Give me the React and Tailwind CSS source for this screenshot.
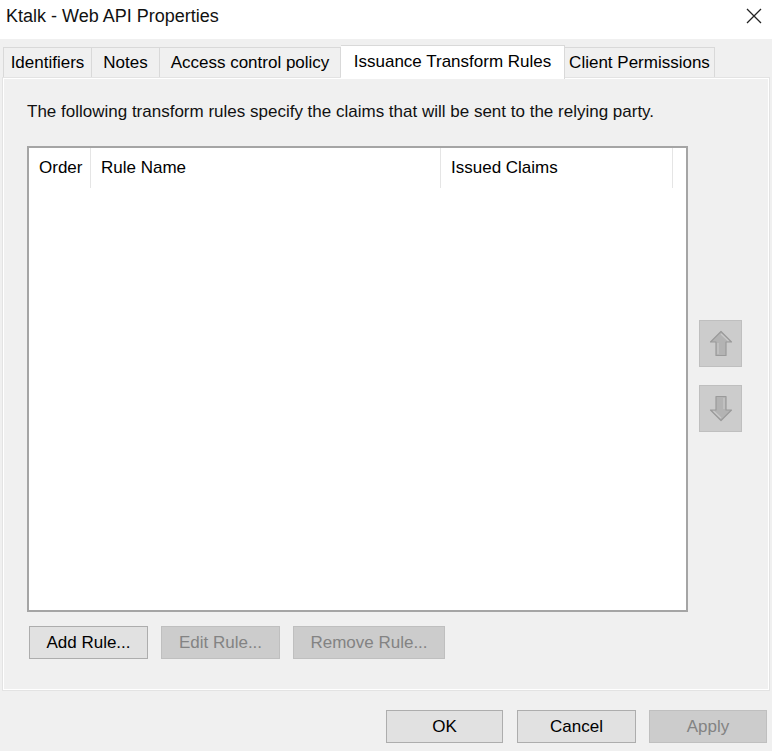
import React from 'react';

const tabs = [
    { label: 'Identifiers', w: 'w-[89px]' },
    { label: 'Notes', w: 'w-[68px]' },
    { label: 'Access control policy', w: 'w-[181px]' },
    { label: 'Issuance Transform Rules', w: 'w-[224px]', active: true },
    { label: 'Client Permissions', w: 'w-[150px]' },
];

const ArrowIcon = ({ down }) => (
    <svg width="24" height="27" viewBox="0 0 24 27" className={down ? 'rotate-180' : ''}>
        <path d="M12 1.5 L22.5 12 L17 12 L17 25.5 L7 25.5 L7 12 L1.5 12 Z" fill="#b3b3b3" stroke="#9a9a9a" strokeWidth="1.2" strokeLinejoin="round" />
        <path d="M12 4 L19.5 11 M9 13 L9 24" stroke="#c9c9c9" strokeWidth="1.2" fill="none" />
    </svg>
);

const Button = ({ children, disabled, className = '' }) => (
    <div
        className={`h-[33px] flex items-center justify-center border ${disabled
            ? 'bg-[#cccccc] border-[#bfbfbf] text-[#838383]'
            : 'bg-[#e1e1e1] border-[#adadad] text-black'
            } ${className}`}
    >
        {children}
    </div>
);

export default function App() {
    return (
        <div className="w-[772px] h-[751px] bg-[#f0f0f0] flex flex-col text-[17px] text-black overflow-hidden" style={{ fontFamily: '"Liberation Sans", Arial, sans-serif' }}>
            {/* Title bar */}
            <div className="h-[39px] bg-white flex items-center justify-between pl-[6px] pr-[10px] pb-[7px] shrink-0">
                <span className="text-[18px] text-[#111]">Ktalk - Web API Properties</span>
                <svg width="16" height="16" viewBox="0 0 16 16">
                    <path d="M1 1 L15 15 M15 1 L1 15" stroke="#222" strokeWidth="1.3" />
                </svg>
            </div>

            {/* Tabs */}
            <div className="mt-[5px] pl-[3px] h-[34px] flex items-end shrink-0">
                {tabs.map((t, i) => (
                    <div
                        key={t.label}
                        className={`${t.w} flex items-center justify-center border border-b-0 border-[#d9d9d9] ${i > 0 ? 'border-l-0' : ''} ${t.active
                            ? 'h-[34px] bg-white pb-[2px] relative z-10 -mb-px border-l'
                            : 'h-[31px] bg-[#f0f0f0]'
                            }`}
                    >
                        {t.label}
                    </div>
                ))}
            </div>

            {/* Panel */}
            <div className="mx-[3px] h-[612px] border border-white bg-[#f0f0f0] shadow-[0_0_0_1px_#e3e3e3] flex flex-col pl-[23px] shrink-0">
                <p className="mt-[23px] h-[20px] leading-[20px] text-[#111]">
                    The following transform rules specify the claims that will be sent to the relying party.
                </p>

                <div className="mt-[24px] flex">
                    {/* List */}
                    <div className="w-[661px] h-[466px] bg-white border-2 border-[#a5a5a5]">
                        <div className="flex h-[40px]">
                            <div className="w-[62px] pl-[10px] flex items-center border-r border-[#e5e5e5]">Order</div>
                            <div className="w-[350px] pl-[10px] flex items-center border-r border-[#e5e5e5]">Rule Name</div>
                            <div className="w-[232px] pl-[10px] flex items-center border-r border-[#e5e5e5]">Issued Claims</div>
                        </div>
                    </div>

                    {/* Move buttons */}
                    <div className="ml-[11px] pt-[174px] flex flex-col gap-[18px]">
                        <div className="w-[43px] h-[47px] bg-[#cccccc] border border-[#bfbfbf] flex items-center justify-center">
                            <ArrowIcon />
                        </div>
                        <div className="w-[43px] h-[47px] bg-[#cccccc] border border-[#bfbfbf] flex items-center justify-center">
                            <ArrowIcon down />
                        </div>
                    </div>
                </div>

                <div className="mt-[14px] pl-[2px] flex gap-[13px]">
                    <Button className="w-[119px]">Add Rule...</Button>
                    <Button disabled className="w-[119px]">Edit Rule...</Button>
                    <Button disabled className="w-[152px]">Remove Rule...</Button>
                </div>
            </div>

            {/* Footer */}
            <div className="mt-[20px] flex justify-end pr-[5px]">
                <Button className="w-[117px]">OK</Button>
                <Button className="w-[119px] ml-[14px]">Cancel</Button>
                <Button disabled className="w-[118px] ml-[13px]">Apply</Button>
            </div>
        </div>
    );
}
